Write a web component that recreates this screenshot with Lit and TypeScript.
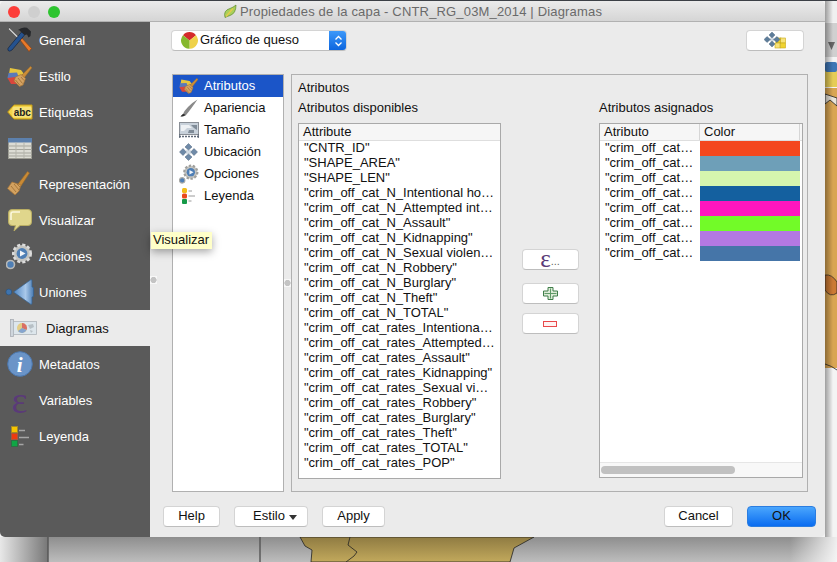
import { LitElement, html, svg, css } from "lit";
import { customElement } from "lit/decorators.js";

const stylePatch = svg`
  <path d="M3 2 L14 4 L17 8 L8 11 L2 8 Z" fill="#e6c53f"/>
  <path d="M1.5 7 L10 6.5 L12 12 L6 15 L.5 12 Z" fill="#5b79b9"/>
  <path d="M.5 12 L8 11 L10 18 L4 18 Z" fill="#d9463c"/>
  <path d="M14 10 L23.5 .3 L25 1.8 L17 12 Z" fill="#cc8d38" stroke="#9a6a28" stroke-width=".5"/>
  <path d="M8.5 11 L14 8.5 L18.5 12.5 L16 19 L12.5 20.5 L7 15 Z" fill="#d4a262" stroke="#a87636" stroke-width=".7"/>
  <path d="M8.5 14 L13 19.5 M11 12 L15.5 17.5 M14 11 L17 14.5" stroke="#9c6c30" stroke-width=".8" fill="none"/>`;

const ICONS: Record<string, any> = {
  general: html`<svg viewBox="0 0 25 26" width="25" height="26">
    <path d="M1 2 L2.5 .8 L13 11 L11.5 12.5 Z" fill="#c9c9c9" stroke="#333" stroke-width=".5"/>
    <path d="M11.5 11 L13.5 9.5 L24.5 21.5 L22 24.5 Z" fill="#e8792a" stroke="#8d4312" stroke-width=".7"/>
    <path d="M15 4.5 L18 7.5 L5 23 Q2.5 25 1.2 23.5 Q0 22 2 20 Z" fill="#25528f" stroke="#16253f" stroke-width=".7"/>
    <path d="M11 3 Q15 -.5 20 .8 L24 4.5 L23.5 9 L21.5 10.5 L20 7.5 L17.5 8 L14 5 Q13 3.2 11 3 Z" fill="#26282b"/>
  </svg>`,
  estilo: html`<svg viewBox="0 0 25 21" width="25" height="21">${stylePatch}</svg>`,
  etiquetas: html`<svg viewBox="0 0 26 16" width="26" height="16">
    <path d="M.7 8 L7 1 H25 V15 H7 Z" fill="#f3d44b" stroke="#c49a12" stroke-width="1"/>
    <rect x="5.5" y="3" width="19" height="10.5" rx="1" fill="#f7e27a"/>
    <text x="15.3" y="12" text-anchor="middle" class="abc">abc</text>
  </svg>`,
  campos: html`<svg viewBox="0 0 24 21" width="24" height="21">
    <rect x=".5" y=".5" width="23" height="20" fill="#dcdcd4" stroke="#9b9b92"/>
    <rect x="0" y="0" width="24" height="4.5" fill="#5c80ad"/>
    <path d="M0 8 H24 M0 11.5 H24 M0 15 H24 M0 18 H24" stroke="#a5a59c" stroke-width="1"/>
    <path d="M8 4.5 V20 M16 4.5 V20" stroke="#b5b5ac" stroke-width="1"/>
  </svg>`,
  representacion: html`<svg viewBox="0 0 25 26" width="25" height="26">
    <path d="M11 13 L20.5 .5 L22.5 2 L14 15 Z" fill="#c98a35" stroke="#9a6a28" stroke-width=".6"/>
    <path d="M5 11 L14 14 L12 20 L8 24 L.5 17.5 Z" fill="#d2a160" stroke="#a87636" stroke-width=".7"/>
    <path d="M4 15 L9 21 M7 13 L12 19 M10 13 L13 16" stroke="#9c6c30" stroke-width=".8" fill="none"/>
  </svg>`,
  visualizar: html`<svg viewBox="0 0 24 23" width="24" height="23">
    <path d="M4 .5 H20 Q23.5 .5 23.5 4 V13 Q23.5 16.5 20 16.5 H12 L6 22 L7.5 16.5 H4 Q.5 16.5 .5 13 V4 Q.5 .5 4 .5 Z" fill="#e0d68c" stroke="#b9ad63" stroke-width="1"/>
    <path d="M3 11 V5 Q3 3 5 3 H12" stroke="#fbf8dc" stroke-width="1.6" fill="none"/>
  </svg>`,
  acciones: html`<svg viewBox="0 0 27 27" width="27" height="27">
    <circle cx="16" cy="10.5" r="8.5" fill="#b9b9b6" stroke="#dcdcdc" stroke-width="3" stroke-dasharray="3 2"/>
    <circle cx="16" cy="10.5" r="7.5" fill="#c4c4c0"/>
    <circle cx="16" cy="10.5" r="5.4" fill="#4f7fb5"/>
    <path d="M14 7.5 L19.5 10.5 L14 13.5 Z" fill="#f2f5f9"/>
    <circle cx="4.5" cy="21.5" r="4" fill="#4f7fb5" stroke="#b9b9b6" stroke-width="1.6"/>
  </svg>`,
  uniones: html`<svg viewBox="0 0 29 26" width="29" height="26">
    <defs><linearGradient id="ug" x1="0" x2="1" y1="0" y2="0"><stop offset="0" stop-color="#4f86c2"/><stop offset=".6" stop-color="#a9c8ea"/><stop offset="1" stop-color="#4a7cb3"/></linearGradient></defs>
    <circle cx="3.8" cy="13" r="2.9" fill="#3f74ad" stroke="#264f7c" stroke-width=".6"/>
    <path d="M8.5 13 L26 .6 L27 1.2 V8 L28.5 8.5 V17.5 L27 18 V24.8 L26 25.4 Z" fill="url(#ug)" stroke="#34608f" stroke-width=".7"/>
  </svg>`,
  diagramas: html`<svg viewBox="0 0 27 18" width="27" height="18">
    <rect x=".5" y=".5" width="3" height="17" fill="#cfd6dd" stroke="#a8adb3" stroke-width=".8"/>
    <rect x="3.5" y="2.5" width="23" height="13" fill="#dde6ec" stroke="#aeb5bb" stroke-width=".8"/>
    <path d="M18 6 l5 -1 l1 3 l-4 2 Z M20 11 l3 1 l-2 2 Z" fill="#b7c0c6"/>
    <circle cx="12" cy="9" r="5" fill="#e3cd86"/>
    <path d="M12 9 V4 A5 5 0 0 1 16.5 11 Z" fill="#d96f66"/>
    <path d="M12 9 L16.5 11 A5 5 0 0 1 8 12 Z" fill="#86a5cf"/>
  </svg>`,
  metadatos: html`<svg viewBox="0 0 26 26" width="26" height="26">
    <circle cx="13" cy="13" r="12.3" fill="#6a94c8" stroke="#4c77ad" stroke-width="1"/>
    <text x="12.6" y="20.5" text-anchor="middle" class="info">i</text>
  </svg>`,
  variables: html`<span class="eps">ε</span>`,
  leyenda: html`<svg viewBox="0 0 18 21" width="18" height="21">
    <rect x=".5" y=".5" width="6" height="6" fill="#f7c600" stroke="#a58a2a"/>
    <rect x=".5" y="7.5" width="6" height="6" fill="#ee3a10" stroke="#a8563a"/>
    <rect x=".5" y="14.5" width="6" height="6" fill="#10a545" stroke="#2d6f44"/>
    <path d="M8 4.5 H14 M8 11.5 H18 M8 18.5 H12.5" stroke="#a5a5a5" stroke-width="1.6"/>
  </svg>`,
  atributos: html`<svg viewBox="0 0 25 21" width="19" height="16">${stylePatch}</svg>`,
  apariencia: html`<svg viewBox="0 0 18 18" width="18" height="18">
    <path d="M17.5 .5 Q13 3 8 8 Q4 12 3 15 Q1.5 16 .5 17.5 Q5 17.5 6.5 15.5 Q11 10 17.5 .5 Z" fill="#8a8a8a"/>
    <path d="M.5 17.5 Q2 15.5 3 15 Q4.5 15 5.5 16 Q3.5 17.5 .5 17.5 Z" fill="#2d2d2d"/>
  </svg>`,
  tamano: html`<svg viewBox="0 0 20 16" width="20" height="16">
    <rect x=".5" y=".5" width="19" height="12" fill="#c8d1da" stroke="#8a8f96"/>
    <path d="M2 3 H10 L13 6 H8 L5 9 H2 Z" fill="#eef1f4"/>
    <path d="M12 3 H18 V8 L15 6 Z M10 8 H15 V11 H9 Z" fill="#7f8b97"/>
    <path d="M0 14.5 H20" stroke="#5f6a78" stroke-width="1.4" stroke-dasharray="2 1"/>
    <path d="M.7 12 V16 M19.3 12 V16" stroke="#5f6a78"/>
  </svg>`,
  ubicacion: html`<svg viewBox="0 0 19 18" width="19" height="18">
    <rect x="7.2" y="6.7" width="4.6" height="4.6" fill="#d5dde5"/>
    <g fill="#6f8aa8" stroke="#50667e" stroke-width=".5">
      <path d="M9.5 .5 L13 4 L9.5 7 L6 4 Z"/><path d="M9.5 11 L13 14 L9.5 17.5 L6 14 Z"/>
      <path d="M.5 9 L4 5.5 L7.3 9 L4 12.5 Z"/><path d="M11.7 9 L15 5.5 L18.5 9 L15 12.5 Z"/>
    </g>
  </svg>`,
  opciones: html`<svg viewBox="0 0 22 22" width="20" height="20">
    <circle cx="13" cy="9" r="7.2" fill="#c4c4c0" stroke="#9f9f9c" stroke-width="2.4" stroke-dasharray="2.6 1.8"/>
    <circle cx="13" cy="9" r="4.6" fill="#4f7fb5"/>
    <path d="M11.5 6.5 L16 9 L11.5 11.5 Z" fill="#f2f5f9"/>
    <circle cx="3.5" cy="18" r="3" fill="#4f7fb5" stroke="#a9a9a6" stroke-width="1.2"/>
  </svg>`,
  leyenda2: html`<svg viewBox="0 0 14 16" width="14" height="16">
    <rect x="0" y="0" width="5" height="5" rx="1.5" fill="#f2bd1a"/>
    <rect x="0" y="5.5" width="5" height="5" rx="1.5" fill="#e94a1c"/>
    <rect x="0" y="11" width="5" height="5" rx="1" fill="#169a48"/>
    <path d="M6.5 3 H10 M6.5 8 H13 M6.5 13 H9.5" stroke="#9a9a9a" stroke-width="1"/>
  </svg>`,
};

const pie = html`<svg viewBox="0 0 17 17" width="17" height="17">
  <path d="M8.5 8.5 L2 3.2 A8.3 8.3 0 0 1 15 3.2 Z" fill="#d42a2a"/>
  <path d="M8.5 8.5 L15 3.2 A8.3 8.3 0 0 1 8.5 16.8 Z" fill="#efd24a"/>
  <path d="M8.5 8.5 L8.5 16.8 A8.3 8.3 0 0 1 2 3.2 Z" fill="#86b82e"/>
</svg>`;

const moveIcon = html`<svg viewBox="0 0 22 17" width="22" height="17">
  <rect x="12" y="6" width="5" height="5" fill="#f0d32f" stroke="#c8a915" stroke-width=".6"/>
  <rect x="16.5" y="6" width="5" height="5" fill="#f7e37a" stroke="#c8a915" stroke-width=".6"/>
  <rect x="11" y="11" width="5" height="5" fill="#f7e37a" stroke="#c8a915" stroke-width=".6"/>
  <rect x="16.5" y="11" width="5" height="5" fill="#f0d32f" stroke="#c8a915" stroke-width=".6"/>
  <rect x="6" y="5.5" width="4" height="4" fill="#cfd8e0"/>
  <g fill="#5d7d9a" stroke="#466078" stroke-width=".4">
    <path d="M8 0 L11 3 L8 6 L5 3 Z"/><path d="M8 9 L11 12 L8 15 L5 12 Z"/>
    <path d="M0 7.5 L3 4.5 L6.5 7.5 L3 10.5 Z"/><path d="M9.5 7.5 L13 4.5 L16 7.5 L13 10.5 Z"/>
  </g>
</svg>`;

const plus = html`<svg viewBox="0 0 15 13" width="15" height="13">
  <path d="M5 .5 H10 V4 H14.5 V9 H10 V12.5 H5 V9 H.5 V4 H5 Z" fill="#dcebd7" stroke="#3f7d49"/>
  <path d="M7.5 1.5 V11.5 M1.5 6.5 H13.5" stroke="#5f9a67" stroke-width="1"/>
</svg>`;

const minus = html`<svg viewBox="0 0 14 6" width="14" height="6">
  <rect x=".5" y=".5" width="13" height="5" fill="#fff2f2" stroke="#e8484a"/>
</svg>`;

const NAV: [string, string][] = [
  ["general", "General"], ["estilo", "Estilo"], ["etiquetas", "Etiquetas"], ["campos", "Campos"],
  ["representacion", "Representación"], ["visualizar", "Visualizar"], ["acciones", "Acciones"],
  ["uniones", "Uniones"], ["diagramas", "Diagramas"], ["metadatos", "Metadatos"],
  ["variables", "Variables"], ["leyenda", "Leyenda"],
];

const SUB: [string, string][] = [
  ["atributos", "Atributos"], ["apariencia", "Apariencia"], ["tamano", "Tamaño"],
  ["ubicacion", "Ubicación"], ["opciones", "Opciones"], ["leyenda2", "Leyenda"],
];

const AVAILABLE = [
  '"CNTR_ID"', '"SHAPE_AREA"', '"SHAPE_LEN"', '"crim_off_cat_N_Intentional ho…',
  '"crim_off_cat_N_Attempted int…', '"crim_off_cat_N_Assault"', '"crim_off_cat_N_Kidnapping"',
  '"crim_off_cat_N_Sexual violen…', '"crim_off_cat_N_Robbery"', '"crim_off_cat_N_Burglary"',
  '"crim_off_cat_N_Theft"', '"crim_off_cat_N_TOTAL"', '"crim_off_cat_rates_Intentiona…',
  '"crim_off_cat_rates_Attempted…', '"crim_off_cat_rates_Assault"', '"crim_off_cat_rates_Kidnapping"',
  '"crim_off_cat_rates_Sexual vi…', '"crim_off_cat_rates_Robbery"', '"crim_off_cat_rates_Burglary"',
  '"crim_off_cat_rates_Theft"', '"crim_off_cat_rates_TOTAL"', '"crim_off_cat_rates_POP"',
];

const COLORS = ["#f4471e", "#6e9fb8", "#d5f5ae", "#14609f", "#ff16be", "#72fb28", "#b378e2", "#4575a8"];

@customElement("app-root")
export class AppRoot extends LitElement {
  static styles = css`
    :host { display: block; width: 837px; height: 562px; overflow: hidden; position: relative;
      font: 13px "Liberation Sans", Arial, sans-serif; color: #111; background: #c9c9c9; }
    * { box-sizing: border-box; }
    .backdrop { position: absolute; inset: 0; }
    .window { position: relative; width: 825px; height: 536px; margin-top: 1px; border-radius: 5px;
      background: #ebebeb; overflow: hidden; display: flex; flex-direction: column; }
    .title { height: 21px; flex: none; display: flex; align-items: center; justify-content: center; gap: 3px;
      background: linear-gradient(#ebebeb, #d5d5d5); border-bottom: 1px solid #b1b1b1; color: #6a6a6a;
      position: relative; font-size: 13px; letter-spacing: .17px; }
    .lights { position: absolute; left: 8px; top: 5px; display: flex; gap: 8px; }
    .light { width: 12px; height: 12px; border-radius: 50%; }
    .body { flex: 1; display: flex; min-height: 0; }
    .side { width: 150px; flex: none; background: #5a5a5a; display: flex; flex-direction: column; }
    .nav { height: 36px; display: flex; align-items: center; color: #fff; flex: none; }
    .nav .ic { width: 39px; flex: none; display: flex; justify-content: center; }
    .nav.sel { background: #ebebeb; color: #111; }
    .nav.sel .ic { width: 46px; }
    .eps { font: 38px/24px "Liberation Serif", serif; color: #5a3a78; }
    .main { flex: 1; padding: 8px 9px 10px; display: flex; flex-direction: column; min-width: 0; }
    .top { display: flex; justify-content: space-between; margin: 0 12px; flex: none; }
    .combo { width: 176px; height: 21px; background: #fff; border-radius: 4px; display: flex; align-items: center;
      border: 1px solid #d4d4d4; border-bottom-color: #bdbdbd; position: relative; padding-left: 9px; gap: 2px; overflow: hidden; }
    .combo .lbl { padding-bottom: 3px; }
    .stepper { position: absolute; right: -1px; top: -1px; bottom: -1px; width: 18px; background: linear-gradient(#3f9bfb, #0a63dd);
      display: flex; align-items: center; justify-content: center; }
    .btn { height: 21px; background: #fff; border-radius: 4px; display: flex; align-items: center; justify-content: center;
      border: 1px solid #d4d4d4; border-bottom-color: #bdbdbd; flex: none; }
    .content { display: flex; gap: 7px; height: 418px; margin: 23px 8px 0 13px; flex: none; }
    .list { width: 112px; flex: none; background: #fff; border: 1px solid #b0b0b0; }
    .sub { height: 22px; display: flex; align-items: center; padding-bottom: 1px; }
    .sub .ic { width: 31px; flex: none; display: flex; justify-content: center; }
    .sub.sel { background: #1b55c8; color: #fff; }
    .group { flex: 1; border: 1px solid #b0b0b0; padding: 5px 4px 0 6px; min-width: 0; }
    .gtitle { height: 15px; line-height: 15px; }
    .cols { display: flex; margin-top: 5px; }
    .col { display: flex; flex-direction: column; flex: none; }
    .col.l { width: 203px; }
    .col.m { width: 98px; align-items: center; padding-top: 149px; }
    .col.r { width: 204px; }
    .lab { height: 23px; line-height: 15px; }
    .tbl { background: #fff; border: 1px solid #a9a9a9; display: flex; flex-direction: column; position: relative; overflow: hidden; }
    .col.l .tbl { height: 356px; }
    .col.r .tbl { height: 355px; }
    .th { height: 17px; flex: none; display: flex; background: #f6f6f6; border-bottom: 1px solid #dedede; line-height: 15px; }
    .th span { padding-left: 4px; }
    .th .c1 { width: 100px; border-right: 1px solid #d6d6d6; }
    .th .c2 { width: 100px; border-right: 1px solid #d6d6d6; }
    .row { height: 15px; line-height: 14px; display: flex; white-space: nowrap; flex: none; padding-left: 5px; }
    .rrow { height: 15px; line-height: 14px; display: flex; white-space: nowrap; flex: none; }
    .rrow .t { width: 100px; padding-left: 5px; overflow: hidden; }
    .rrow .sw { width: 100px; height: 15px; }
    .sb { position: absolute; left: 0; right: 0; bottom: 0; height: 15px; background: #f8f8f8; border-top: 1px solid #e6e6e6; }
    .thumb { position: absolute; left: 1px; top: 3px; width: 134px; height: 8px; border-radius: 4px; background: #c1c1c1; }
    .mbtn { width: 57px; }
    .meps { font: 25px/19px "Liberation Serif", serif; color: #5a3a78; padding-bottom: 3px; }
    .mdots { font-size: 11px; color: #666; padding-top: 3px; }
    .bottom { display: flex; margin-top: 14px; height: 21px; flex: none; align-items: center; }
    .bottom .btn { font-size: 13px; padding-bottom: 2px; }
    .w57 { width: 57px; margin-left: 4px; }
    .w74 { width: 74px; margin-left: 14px; gap: 4px; }
    .bottom .w74 { padding-left: 8px; }
    .w63 { width: 63px; margin-left: 14px; }
    .w69 { width: 69px; }
    .spacer { flex: 1; }
    .ok { margin-left: 14px; background: linear-gradient(#4aa6fd, #0a6cf0); color: #111; border-color: #2b7de0; }
    .caret { width: 0; height: 0; border-left: 4px solid transparent; border-right: 4px solid transparent; border-top: 5px solid #333; margin-top: 3px; }
    .tip { position: absolute; left: 151px; top: 232px; width: 61px; height: 17px; line-height: 16px; padding-left: 2px;
      background: #ffffc9; box-shadow: 0 3px 9px rgba(0,0,0,.35); font-size: 13px; white-space: nowrap; }
    .handle { position: absolute; width: 7px; height: 8px; background: radial-gradient(circle at 50% 50%, #c4c4c4 2.8px, #f8f8f8 3.4px); }
    .abc { font: bold 10px "Liberation Sans", sans-serif; fill: #222; }
    .info { font: italic bold 21px "Liberation Serif", serif; fill: #fff; }
  `;

  render() {
    return html`
      <svg class="backdrop" viewBox="0 0 837 562" width="837" height="562">
        <defs>
          <linearGradient id="pan" x1="0" x2="1" y1="0" y2="0"><stop offset="0" stop-color="#e8e8e8"/><stop offset="1" stop-color="#777"/></linearGradient>
          <linearGradient id="ground" x1="0" x2="0" y1="0" y2="1"><stop offset="0" stop-color="#8e8e8e"/><stop offset="1" stop-color="#bdbdbd"/></linearGradient>
          <linearGradient id="land" x1="0" x2="0" y1="0" y2="1"><stop offset="0" stop-color="#8f7b42"/><stop offset="1" stop-color="#c2a95c"/></linearGradient>
          <linearGradient id="fade" x1="0" x2="1" y1="0" y2="0"><stop offset="0" stop-color="#fff" stop-opacity="0"/><stop offset="1" stop-color="#fff" stop-opacity=".85"/></linearGradient>
          <linearGradient id="edge" x1="0" x2="1" y1="0" y2="0"><stop offset="0" stop-color="#000" stop-opacity=".35"/><stop offset="1" stop-color="#000" stop-opacity="0"/></linearGradient>
        </defs>
        <rect width="837" height="562" fill="#f4f4f4"/>
        <rect width="837" height="1" fill="#3c4046"/>
        <rect x="825" y="1" width="12" height="21" fill="#f0f0f0"/>
        <rect x="825" y="23" width="12" height="34" fill="#d0d0d0"/>
        <path d="M828 42 H835 L831.5 50 Z" fill="#666"/>
        <rect x="825" y="67" width="12" height="20" fill="#e6cc57"/>
        <rect x="825" y="62" width="12" height="10" fill="#3f76b5" rx="2"/>
        <rect x="825" y="88" width="12" height="280" fill="#d9a553"/>
        <path d="M825 94 L837 98 V106 L830 100 L825 104 Z" fill="#e9e4da" stroke="#222" stroke-width=".8"/>
        <path d="M825 275 Q832 274 837 282 V293 Q830 298 825 290 Z" fill="#cb7a34" stroke="#222" stroke-width=".7"/>
        <path d="M825 364 Q832 366 837 370" fill="none" stroke="#222" stroke-width=".8"/>
        <rect x="825" y="1" width="8" height="561" fill="url(#edge)"/>
        <rect x="0" y="537" width="837" height="25" fill="url(#ground)"/>
        <rect x="0" y="537" width="48" height="25" fill="url(#pan)"/>
        <path d="M48 537 V562 M260 537 V562" stroke="#555" stroke-width="1.4"/>
        <path d="M300 537 L305 546 L312 550 L311 562 H510 L514 548 L534 537 Z" fill="url(#land)" stroke="#222" stroke-width=".8"/>
        <path d="M350 537 L348 545 L357 552 L354 556 L346 562" fill="none" stroke="#222" stroke-width=".8"/>
        <rect x="790" y="537" width="47" height="25" fill="url(#fade)"/>
      </svg>
      <div class="window">
        <div class="title">
          <div class="lights">
            <span class="light" style="background:#fc3d39"></span>
            <span class="light" style="background:#cfcfcf"></span>
            <span class="light" style="background:#2dc42f"></span>
          </div>
          <svg viewBox="0 0 14 14" width="14" height="15">
            <path d="M2 13 Q0 6 7 4 Q10 3 13 .5 Q13 9 7 11 Q4 12 2 13 Z" fill="#a9d05a" stroke="#5d8a2a" stroke-width=".7"/>
            <path d="M3 12 L10 4" stroke="#e9c94a" stroke-width="1.2"/>
          </svg>
          <span>Propiedades de la capa - CNTR_RG_03M_2014 | Diagramas</span>
        </div>
        <div class="body">
          <div class="side">
            ${NAV.map(([k, t]) => html`<div class="nav ${k === "diagramas" ? "sel" : ""}">
              <div class="ic">${ICONS[k]}</div><span>${t}</span></div>`)}
          </div>
          <div class="main">
            <div class="top">
              <div class="combo">${pie}<span class="lbl">Gráfico de queso</span>
                <div class="stepper"><svg viewBox="0 0 9 14" width="9" height="14">
                  <path d="M1.5 5.5 L4.5 2.5 L7.5 5.5 M1.5 8.5 L4.5 11.5 L7.5 8.5" fill="none" stroke="#fff" stroke-width="1.3"/>
                </svg></div>
              </div>
              <div class="btn" style="width:58px">${moveIcon}</div>
            </div>
            <div class="content">
              <div class="list">
                ${SUB.map(([k, t], i) => html`<div class="sub ${i === 0 ? "sel" : ""}">
                  <div class="ic">${ICONS[k]}</div><span>${t}</span></div>`)}
              </div>
              <div class="group">
                <div class="gtitle">Atributos</div>
                <div class="cols">
                  <div class="col l">
                    <div class="lab">Atributos disponibles</div>
                    <div class="tbl">
                      <div class="th"><span>Attribute</span></div>
                      ${AVAILABLE.map((t) => html`<div class="row">${t}</div>`)}
                    </div>
                  </div>
                  <div class="col m">
                    <div class="btn mbtn"><span class="meps">ε</span><span class="mdots">...</span></div>
                    <div class="btn mbtn" style="margin-top:13px">${plus}</div>
                    <div class="btn mbtn" style="margin-top:9px">${minus}</div>
                  </div>
                  <div class="col r">
                    <div class="lab">Atributos asignados</div>
                    <div class="tbl">
                      <div class="th"><span class="c1">Atributo</span><span class="c2">Color</span></div>
                      ${COLORS.map((c) => html`<div class="rrow"><div class="t">"crim_off_cat…</div>
                        <div class="sw" style="background:${c}"></div></div>`)}
                      <div class="sb"><div class="thumb"></div></div>
                    </div>
                  </div>
                </div>
              </div>
            </div>
            <div class="bottom">
              <div class="btn w57">Help</div>
              <div class="btn w74">Estilo<span class="caret"></span></div>
              <div class="btn w63">Apply</div>
              <div class="spacer"></div>
              <div class="btn w69">Cancel</div>
              <div class="btn w69 ok">OK</div>
            </div>
          </div>
        </div>
      </div>
      <span class="handle" style="left:150px;top:276px"></span>
      <span class="handle" style="left:284px;top:279px"></span>
      <div class="tip">Visualizar</div>
    `;
  }
}
